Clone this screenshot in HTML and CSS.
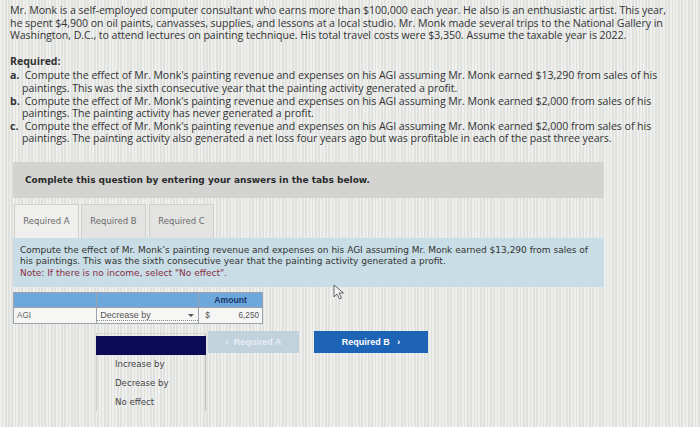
FILE: index.html
```html
<!DOCTYPE html>
<html>
<head>
<meta charset="utf-8">
<link rel="stylesheet" href="styles.css">
</head>
<body>
<div class="page">
  <div class="intro">
    <p>Mr. Monk is a self-employed computer consultant who earns more than $100,000 each year. He also is an enthusiastic artist. This year, he spent $4,900 on oil paints, canvasses, supplies, and lessons at a local studio. Mr. Monk made several trips to the National Gallery in Washington, D.C., to attend lectures on painting technique. His total travel costs were $3,350. Assume the taxable year is 2022.</p>
    <p class="req-title">Required:</p>
    <ol class="req-list">
      <li><b>a.</b> Compute the effect of Mr. Monk's painting revenue and expenses on his AGI assuming Mr. Monk earned $13,290 from sales of his paintings. This was the sixth consecutive year that the painting activity generated a profit.</li>
      <li><b>b.</b> Compute the effect of Mr. Monk's painting revenue and expenses on his AGI assuming Mr. Monk earned $2,000 from sales of his paintings. The painting activity has never generated a profit.</li>
      <li><b>c.</b> Compute the effect of Mr. Monk's painting revenue and expenses on his AGI assuming Mr. Monk earned $2,000 from sales of his paintings. The painting activity also generated a net loss four years ago but was profitable in each of the past three years.</li>
    </ol>
  </div>

  <div class="question">
    <div class="banner">Complete this question by entering your answers in the tabs below.</div>
    <div class="tabs">
      <div class="tab active">Required A</div>
      <div class="tab">Required B</div>
      <div class="tab">Required C</div>
    </div>
    <div class="instructions">
      <p>Compute the effect of Mr. Monk’s painting revenue and expenses on his AGI assuming Mr. Monk earned $13,290 from sales of his paintings. This was the sixth consecutive year that the painting activity generated a profit.</p>
      <p class="note">Note: If there is no income, select "No effect".</p>
    </div>

    <table class="grid">
      <tr class="head">
        <th class="c1"></th>
        <th class="c2"></th>
        <th class="c3">Amount</th>
      </tr>
      <tr class="row">
        <td class="c1">AGI</td>
        <td class="c2"><div class="select"><span>Decrease by</span><span class="arrow"></span></div></td>
        <td class="c3"><div class="amt"><span>$</span><span>6,250</span></div></td>
      </tr>
    </table>

    <div class="below">
      <div class="dropdown">
        <div class="sel-bar"></div>
        <div class="opt">Increase by</div>
        <div class="opt">Decrease by</div>
        <div class="opt">No effect</div>
      </div>
      <div class="btn prev">&lsaquo;&nbsp;&nbsp;Required A</div>
      <div class="btn next">Required B&nbsp;&nbsp;&nbsp;&rsaquo;</div>
    </div>
  </div>

  <svg class="cursor" width="12" height="16" viewBox="0 0 12 16"><path d="M1 1 L1 13 L4 10 L6.5 15 L8.5 14 L6 9 L10.5 9 Z" fill="#f4f4f4" stroke="#555" stroke-width="0.9" stroke-linejoin="round"/></svg>
</div>
</body>
</html>
```

FILE: styles.css
```css
html, body {
  margin: 0;
  padding: 0;
}
body {
  width: 700px;
  height: 427px;
  overflow: hidden;
  background-color: #e7e8e5;
  background-image: repeating-linear-gradient(90deg, rgba(255,255,255,0.35) 0px, rgba(255,255,255,0.35) 1.6px, rgba(160,170,170,0.1) 1.6px, rgba(160,170,170,0.1) 3.3px);
}
.page {
  position: relative;
  padding: 4px 0 0 10px;
}
.intro {
  font-family: "Open Sans", Lato, sans-serif;
  font-size: 10.6px;
  line-height: 12.6px;
  color: #333;
  width: 660px;
  letter-spacing: -0.05px;
}
.intro p {
  margin: 0;
}
.req-title {
  margin-top: 13px !important;
  margin-bottom: 2px !important;
  font-weight: bold;
}
.req-list {
  list-style: none;
  margin: 0;
  padding: 0;
}
.req-list li {
  padding-left: 12px;
  text-indent: -12px;
  width: 648px;
}
.req-list li b {
  display: inline-block;
  width: 12px;
  text-indent: 0;
  color: #333;
}

.question {
  margin: 17px 0 0 3px;
  width: 591px;
}
.banner {
  height: 36px;
  background: #d3d4d2;
  font-family: "DejaVu Sans", Verdana, sans-serif;
  font-weight: bold;
  font-size: 9px;
  color: #2a2a2a;
  display: flex;
  align-items: center;
  padding-left: 12px;
}
.tabs {
  margin-top: 6px;
  display: flex;
  gap: 2px;
  padding-left: 1px;
}
.tab {
  height: 34px;
  width: 65px;
  box-sizing: border-box;
  border: 1px solid #cfd0ce;
  border-bottom: none;
  background: #e3e4e2;
  font-family: "DejaVu Sans", Verdana, sans-serif;
  font-size: 8.5px;
  color: #6a6a6a;
  display: flex;
  align-items: center;
  justify-content: center;
  padding-bottom: 1px;
}
.tab.active {
  background: #efefed;
}
.tabs .tab:nth-child(3) {
  margin-left: 1px;
}
.instructions {
  background: #c8dde5;
  padding: 7px 7px 8px 7px;
  font-family: "DejaVu Sans", Verdana, sans-serif;
  font-size: 9px;
  line-height: 11.5px;
  color: #333;
}
.instructions p {
  margin: 0;
}
.instructions .note {
  color: #8a2d43;
}

.grid {
  margin-top: 5px;
  border-collapse: collapse;
  width: 250px;
  font-family: "Liberation Sans", Arial, sans-serif;
  font-size: 8.2px;
}
.grid th, .grid td {
  padding: 0;
  border: 1px solid #9aa3ab;
}
.grid .head th {
  background: #6ea7dc;
  height: 14px;
  color: #173466;
  font-weight: bold;
  font-size: 8.6px;
  text-align: center;
}
.grid .row td {
  background: #f6f6f4;
  height: 15px;
  color: #555;
}
.grid .c1 { width: 82px; }
.grid .c2 { width: 103px; }
.grid .c3 { width: 64px; }
.grid .row .c1 {
  padding-left: 3px;
  color: #666;
}
.select {
  display: flex;
  align-items: center;
  justify-content: space-between;
  padding-left: 3px;
  font-size: 9px;
  color: #555;
  border-bottom: 1px dotted #888;
}
.arrow {
  width: 0;
  height: 0;
  border-left: 3px solid transparent;
  border-right: 3px solid transparent;
  border-top: 3px solid #555;
  margin-right: 4px;
}
.grid .row .c3 {
  border-left: 1px dotted #445;
}
.amt {
  display: flex;
  justify-content: space-between;
  padding: 0 3px 0 6px;
  color: #555;
}

.below {
  display: flex;
  align-items: flex-start;
}
.dropdown {
  margin: 9px 0 0 83px;
  width: 110px;
  height: 78px;
  box-sizing: border-box;
  border-left: 1px solid #d0d0cd;
  border-right: 1px solid #c4c4c1;
  border-top: 1px solid #d6d6d3;
  padding-top: 2px;
  font-family: "DejaVu Sans", Verdana, sans-serif;
  font-size: 8.6px;
  color: #444;
}
.sel-bar {
  height: 19px;
  background: #0b0a55;
  margin-left: -1px;
  margin-right: -1px;
}
.opt {
  height: 19px;
  line-height: 19px;
  padding-left: 18px;
}
.btn {
  margin-top: 7px;
  height: 22px;
  font-family: "Liberation Sans", Arial, sans-serif;
  font-weight: bold;
  font-size: 9px;
  display: flex;
  align-items: center;
  justify-content: center;
  box-sizing: border-box;
}
.btn.prev {
  margin-left: 2px;
  width: 91px;
  background: #c2d2dd;
  color: #e6edf2;
}
.btn.next {
  margin-left: 15px;
  width: 114px;
  background: #1d63b6;
  color: #ffffff;
}
.cursor {
  position: absolute;
  left: 333px;
  top: 284px;
}
```
